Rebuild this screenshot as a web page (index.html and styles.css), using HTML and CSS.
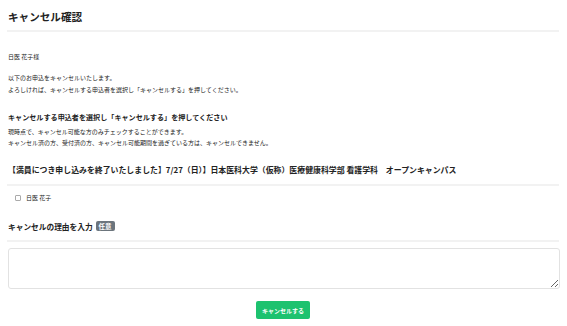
FILE: index.html
```html
<!DOCTYPE html>
<html lang="ja">
<head>
    <meta charset="UTF-8">
    <meta name="viewport" content="width=device-width, initial-scale=1.0">
    <title>キャンセル確認</title>
    <link rel="stylesheet" href="styles.css">
</head>
<body>
    <div class="page">
        <h1 class="page-title">キャンセル確認</h1>
        <hr class="rule">

        <p class="name">日医 花子様</p>
        <p class="lead">
            以下のお申込をキャンセルいたします。<br>
            よろしければ、キャンセルする申込者を選択し「キャンセルする」を押してください。
        </p>

        <h2 class="section-title">キャンセルする申込者を選択し「キャンセルする」を押してください</h2>
        <p class="note">
            現時点で、キャンセル可能な方のみチェックすることができます。<br>
            キャンセル済の方、受付済の方、キャンセル可能期間を過ぎている方は、キャンセルできません。
        </p>

        <h3 class="event-title">【満員につき申し込みを終了いたしました】7/27（日）】日本医科大学（仮称）医療健康科学部 看護学科　オープンキャンパス</h3>
        <hr class="rule">

        <label class="applicant">
            <input type="checkbox" class="check">
            <span>日医 花子</span>
        </label>

        <h3 class="reason-title">キャンセルの理由を入力<span class="badge">任意</span></h3>
        <hr class="rule rule-tight">

        <textarea class="reason"></textarea>

        <div class="actions">
            <button class="submit-btn">キャンセルする</button>
        </div>
    </div>
</body>
</html>
```

FILE: styles.css
```css
body {
    margin: 0;
    font-family: "Noto Sans CJK JP", "Noto Sans", sans-serif;
    color: #222;
    background: #fff;
}

.page {
    padding: 0 8px 0 7px;
}

.page-title {
    margin: 10px 0 0 1px;
    font-size: 10.6px;
    line-height: 14px;
    font-weight: bold;
    color: #222;
}

.rule {
    margin: 6px 0 0;
    border: none;
    border-top: 2px solid #f2f2f2;
}

.name {
    margin: 21px 0 0 1px;
    font-size: 6px;
    line-height: 8px;
}

.lead {
    margin: 11px 0 0 1px;
    font-size: 6px;
    line-height: 12px;
}

.section-title {
    margin: 16px 0 0 1px;
    font-size: 7.1px;
    line-height: 10px;
    font-weight: bold;
    color: #222;
}

.note {
    margin: 3.5px 0 0 1px;
    font-size: 6px;
    line-height: 11px;
}

.event-title {
    margin: 17.5px 0 0 1px;
    font-size: 7.9px;
    line-height: 10px;
    font-weight: bold;
    color: #222;
}

.event-title + .rule {
    margin-top: 9px;
}

.applicant {
    display: flex;
    align-items: center;
    gap: 5px;
    margin: 8px 0 0 8px;
    font-size: 6px;
    line-height: 8px;
}

.check {
    appearance: none;
    width: 6px;
    height: 6px;
    margin: 0;
    border: 1px solid #aaa;
    border-radius: 1px;
    background: #fff;
}

.reason-title {
    margin: 19px 0 0 1px;
    font-size: 7.7px;
    line-height: 10px;
    font-weight: bold;
    color: #222;
}

.badge {
    display: inline-block;
    margin-left: 3px;
    padding: 0 3px;
    font-size: 6.5px;
    line-height: 10px;
    font-weight: bold;
    color: #fff;
    background: #6c757d;
    border-radius: 2px;
    vertical-align: 1px;
}

.rule-tight {
    margin-top: 8px;
}

.reason {
    display: block;
    box-sizing: border-box;
    width: 552px;
    height: 41px;
    margin: 6px 0 0 1px;
    border: 1px solid #e2e2e2;
    border-radius: 3px;
    resize: vertical;
}

.actions {
    display: flex;
    justify-content: center;
    margin-top: 12px;
}

.submit-btn {
    height: 18px;
    padding: 0 6px;
    font-family: inherit;
    font-size: 6px;
    font-weight: bold;
    color: #fff;
    background: #1dc26f;
    border: none;
    border-radius: 2px;
    cursor: pointer;
}
```
